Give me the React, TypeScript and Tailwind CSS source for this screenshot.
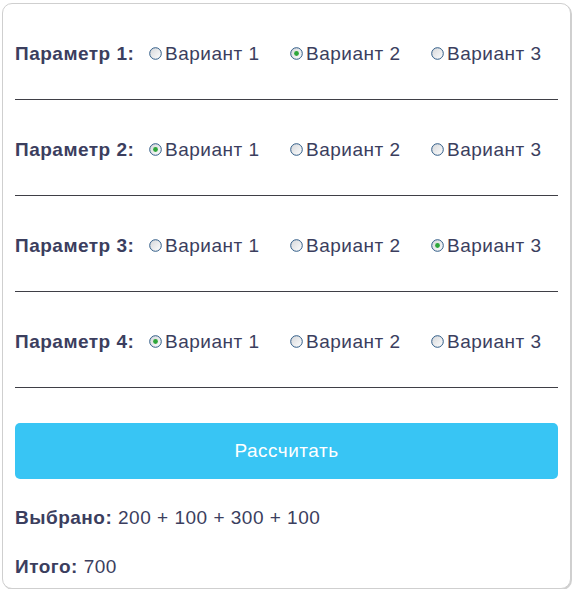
import { useState } from "react";

type Param = { name: string; values: number[] };

const params: Param[] = [
  { name: "Параметр 1:", values: [100, 200, 300] },
  { name: "Параметр 2:", values: [100, 200, 300] },
  { name: "Параметр 3:", values: [100, 200, 300] },
  { name: "Параметр 4:", values: [100, 200, 300] },
];

function Radio({ checked }: { checked: boolean }) {
  return (
    <svg width="13" height="13" viewBox="0 0 13 13" className="-mt-[2px] shrink-0">
      <defs>
        <linearGradient id="rg" x1="0" y1="0" x2="1" y2="1">
          <stop offset="0" stopColor="#d4d6d9" />
          <stop offset="1" stopColor="#ffffff" />
        </linearGradient>
      </defs>
      <circle cx="6.5" cy="6.5" r="5.8" fill="url(#rg)" stroke="#2f5b86" strokeWidth="1" />
      {checked ? <circle cx="6.5" cy="6.5" r="2.4" fill="#2ea63a" /> : null}
    </svg>
  );
}

export default function App() {
  const [sel, setSel] = useState([1, 0, 2, 0]);

  const picked = sel.map((v, i) => params[i].values[v]);
  const total = picked.reduce((a, b) => a + b, 0);

  return (
    <div
      className="ml-[2px] mt-[3px] h-[586px] w-[569px] rounded-[10px] border border-[#cfcfcf] bg-white px-[12px] text-[19px] tracking-[0.5px] text-[#3b3e5e] shadow-[1px_1px_0_#d0d0d0]"
      style={{ fontFamily: '"Liberation Sans", Arial, sans-serif' }}
    >
      {params.map((p, i) => (
        <div key={p.name} className="flex h-[96px] items-start border-b border-[#3f3f46] pt-[40px]">
          <div className="flex h-[20px] items-center">
            <span className="w-[134px] font-bold">{p.name}</span>
            {[0, 1, 2].map((j) => (
              <label
                key={j}
                className="flex w-[141px] cursor-pointer items-center gap-[3px]"
                onClick={() => setSel((s) => s.map((v, k) => (k === i ? j : v)))}
              >
                <Radio checked={sel[i] === j} />
                <span>Вариант {j + 1}</span>
              </label>
            ))}
          </div>
        </div>
      ))}

      <button
        type="button"
        className="mt-[35px] flex h-[56px] w-[543px] items-center justify-center rounded-[5px] bg-[#38c5f4] text-white"
      >
        Рассчитать
      </button>

      <p className="mt-[29px] h-[20px] leading-[20px]">
        <b>Выбрано:</b> {picked.join(" + ")}
      </p>
      <p className="mt-[29px] h-[20px] leading-[20px]">
        <b>Итого:</b> {total}
      </p>
    </div>
  );
}
